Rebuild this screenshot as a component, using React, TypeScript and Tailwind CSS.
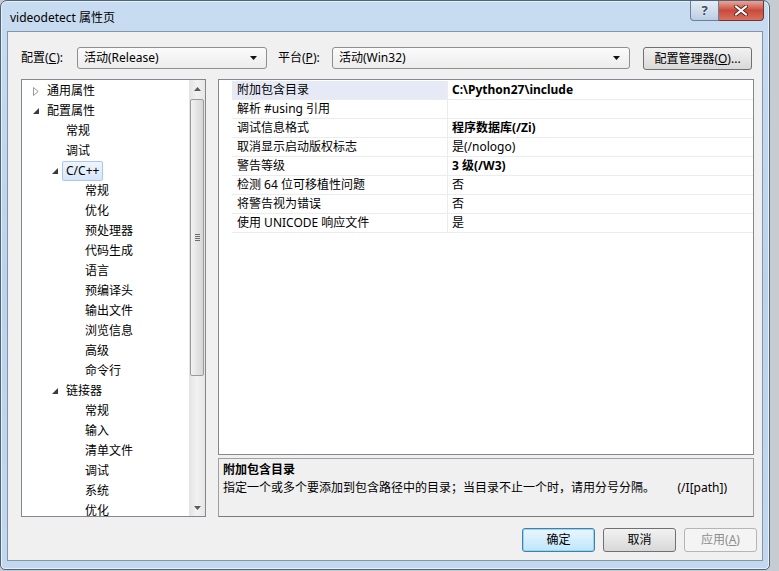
import React from 'react';

type TreeItem = {
  label: string;
  level: 0 | 1 | 2;
  arrow?: 'open' | 'closed';
  selected?: boolean;
};

const treeItems: TreeItem[] = [
  { label: '通用属性', level: 0, arrow: 'closed' },
  { label: '配置属性', level: 0, arrow: 'open' },
  { label: '常规', level: 1 },
  { label: '调试', level: 1 },
  { label: 'C/C++', level: 1, arrow: 'open', selected: true },
  { label: '常规', level: 2 },
  { label: '优化', level: 2 },
  { label: '预处理器', level: 2 },
  { label: '代码生成', level: 2 },
  { label: '语言', level: 2 },
  { label: '预编译头', level: 2 },
  { label: '输出文件', level: 2 },
  { label: '浏览信息', level: 2 },
  { label: '高级', level: 2 },
  { label: '命令行', level: 2 },
  { label: '链接器', level: 1, arrow: 'open' },
  { label: '常规', level: 2 },
  { label: '输入', level: 2 },
  { label: '清单文件', level: 2 },
  { label: '调试', level: 2 },
  { label: '系统', level: 2 },
  { label: '优化', level: 2 },
];

const props: { name: string; value: string; bold?: boolean; focused?: boolean }[] = [
  { name: '附加包含目录', value: 'C:\\Python27\\include', bold: true, focused: true },
  { name: '解析 #using 引用', value: '' },
  { name: '调试信息格式', value: '程序数据库(/Zi)', bold: true },
  { name: '取消显示启动版权标志', value: '是(/nologo)' },
  { name: '警告等级', value: '3 级(/W3)', bold: true },
  { name: '检测 64 位可移植性问题', value: '否' },
  { name: '将警告视为错误', value: '否' },
  { name: '使用 UNICODE 响应文件', value: '是' },
];

const indent = ['pl-[8px]', 'pl-[27px]', 'pl-[46px]'];

const DropArrow = () => (
  <svg width="7" height="4" viewBox="0 0 7 4">
    <path d="M0 0H7L3.5 4Z" fill="#111" />
  </svg>
);

const Combo = ({ text, width }: { text: string; width: string }) => (
  <div
    className={`${width} h-[22px] flex items-center justify-between pl-[6px] pr-[9px] border border-[#8e8f8f] rounded-[3px] bg-linear-to-b from-[#fbfbfb] to-[#ececec]`}
  >
    <span className="text-[12px] leading-none">{text}</span>
    <DropArrow />
  </div>
);

const WinButton = ({
  children,
  variant = 'normal',
}: {
  children: React.ReactNode;
  variant?: 'normal' | 'default' | 'disabled';
}) => {
  let cls = 'w-[73px] h-[24px] flex items-center justify-center rounded-[3px] border text-[12px] ';
  if (variant === 'default') {
    cls += 'border-[#3c7fb1] bg-linear-to-b from-[#eaf6fd] to-[#bee6fd] shadow-[inset_0_0_0_1px_#98d5f5] text-black';
  } else if (variant === 'disabled') {
    cls += 'border-[#b5b5b5] bg-[#f4f4f4] text-[#8d8d8d]';
  } else {
    cls += 'border-[#707070] bg-linear-to-b from-[#f2f2f2] to-[#d8d8d8] text-black';
  }
  return <div className={cls}>{children}</div>;
};

const TreeArrow = ({ kind }: { kind?: 'open' | 'closed' }) => {
  if (kind === 'closed')
    return (
      <svg width="6" height="9" viewBox="0 0 6 9">
        <path d="M0.5 0.5L5.2 4.5L0.5 8.5Z" fill="#fff" stroke="#9a9a9a" />
      </svg>
    );
  if (kind === 'open')
    return (
      <svg width="6" height="6" viewBox="0 0 6 6">
        <path d="M6 0V6H0Z" fill="#3a3a3a" />
      </svg>
    );
  return null;
};

const ScrollArrow = ({ up }: { up?: boolean }) => (
  <div className="h-[17px] flex items-center justify-center">
    <svg width="7" height="4" viewBox="0 0 7 4">
      <path d={up ? 'M0 4H7L3.5 0Z' : 'M0 0H7L3.5 4Z'} fill="#5a5a5a" />
    </svg>
  </div>
);

export default function App() {
  return (
    <div className="w-[779px] h-[571px] overflow-hidden bg-[#c7ccd2] font-['Noto_Sans','Noto_Sans_CJK_SC',sans-serif] text-black">
      <div className="w-[770px] h-[570px] flex flex-col rounded-t-[7px] rounded-b-[5px] border border-[#4f6479] bg-linear-to-b from-[#c8dcf1] via-[#bcd3eb] to-[#c3d8ee] shadow-[inset_0_0_0_1px_#e6f0fa]">
        {/* title bar */}
        <div className="h-[30px] flex items-start">
          <div className="pl-[9px] pt-[8px] text-[12px] leading-[18px]">videodetect 属性页</div>
          <div className="ml-auto mr-[5px] flex">
            <div className="w-[29px] h-[20px] flex items-center justify-center border border-[#6b7f99] border-t-0 rounded-bl-[4px] bg-linear-to-b from-[#e4edf7] to-[#bccde2] text-[13px] font-bold text-[#3d4a5c] leading-none [text-shadow:0_0_2px_#fff]">
              ?
            </div>
            <div className="w-[45px] h-[20px] flex items-center justify-center border border-[#6e3631] border-t-0 border-l-0 rounded-br-[4px] bg-linear-to-b from-[#e7a69a] via-[#c94a3c] to-[#d9705f]">
              <svg width="14" height="11" viewBox="0 0 14 11">
                <path d="M2 1.5L12 9.5M12 1.5L2 9.5" stroke="#5a2a26" strokeWidth="4" strokeLinecap="round" />
                <path d="M2 1.5L12 9.5M12 1.5L2 9.5" stroke="#fff" strokeWidth="2.2" strokeLinecap="round" />
              </svg>
            </div>
          </div>
        </div>

        {/* client area */}
        <div className="flex-1 mx-[6px] mb-[8px] border border-[#8196ad] bg-[#f0f0f0] flex flex-col text-[12px]">
          {/* config row */}
          <div className="pt-[15px] pl-[13px] h-[38px] flex items-start">
            <div className="w-[56px] h-[22px] flex items-center">
              配置(<span className="underline">C</span>):
            </div>
            <Combo text="活动(Release)" width="w-[190px]" />
            <div className="ml-[11px] w-[54px] h-[22px] flex items-center">
              平台(<span className="underline">P</span>):
            </div>
            <Combo text="活动(Win32)" width="w-[298px]" />
            <div className="ml-[13px] w-[109px] h-[23px] flex items-center justify-center rounded-[3px] border border-[#707070] bg-linear-to-b from-[#f2f2f2] to-[#d9d9d9]">
              配置管理器(<span className="underline">O</span>)...
            </div>
          </div>

          {/* main area */}
          <div className="mt-[9px] pl-[13px] flex h-[438px]">
            {/* tree */}
            <div className="w-[185px] border border-[#828790] bg-white flex">
              <div className="flex-1 overflow-hidden pt-[1px]">
                {treeItems.map((it, i) => (
                  <div key={i} className={`h-[20px] flex items-center ${indent[it.level]}`}>
                    <div className="w-[12px] flex items-center justify-center">
                      <TreeArrow kind={it.arrow} />
                    </div>
                    <div
                      className={
                        it.selected
                          ? 'ml-[1px] h-[20px] px-[3px] flex items-center rounded-[2px] border border-[#a9c7ec] bg-linear-to-b from-[#eef5fd] to-[#d6e7fb]'
                          : 'ml-[5px]'
                      }
                    >
                      {it.label}
                    </div>
                  </div>
                ))}
              </div>
              {/* scrollbar */}
              <div className="w-[16px] flex flex-col bg-linear-to-r from-[#e3e3e3] via-[#f2f2f2] to-[#e6e6e6]">
                <ScrollArrow up />
                <div className="flex-1 px-[1px] pt-[2px] pb-[123px]">
                  <div className="h-full rounded-[2px] border border-[#9a9a9a] bg-linear-to-r from-[#f3f3f3] to-[#d6d6d6] flex items-center justify-center">
                    <div className="flex flex-col gap-[1px]">
                      <div className="w-[5px] h-[1px] bg-[#6d6d6d]" />
                      <div className="w-[5px] h-[1px] bg-[#6d6d6d]" />
                      <div className="w-[5px] h-[1px] bg-[#6d6d6d]" />
                      <div className="w-[5px] h-[1px] bg-[#6d6d6d]" />
                    </div>
                  </div>
                </div>
                <ScrollArrow />
              </div>
            </div>

            {/* property grid + description */}
            <div className="ml-[12px] w-[536px] flex flex-col">
              <div className="h-[376px] border border-[#828790] bg-white pt-[1px]">
                {props.map((p, i) => (
                  <div key={i} className="h-[19px] flex">
                    <div className="w-[13px]" />
                    <div
                      className={`w-[216px] pl-[5px] flex items-center border-b border-r border-[#ececec] ${
                        p.focused ? 'bg-[#e6eaf6]' : ''
                      }`}
                    >
                      {p.name}
                    </div>
                    <div className={`flex-1 pl-[4px] flex items-center border-b border-[#ececec] ${p.bold ? 'font-bold' : ''}`}>
                      {p.value}
                    </div>
                  </div>
                ))}
              </div>
              <div className="mt-[3px] flex-1 border border-[#a0a0a0] border-b-[#7a7a7a] pl-[4px] pt-[2px]">
                <div className="font-bold leading-[18px]">附加包含目录</div>
                <div className="flex leading-[18px]">
                  <span>指定一个或多个要添加到包含路径中的目录；当目录不止一个时，请用分号分隔。</span>
                  <span className="ml-auto mr-[26px]">(/I[path])</span>
                </div>
              </div>
            </div>
          </div>

          {/* buttons */}
          <div className="mt-[11px] pr-[5px] flex justify-end gap-[8px]">
            <WinButton variant="default">确定</WinButton>
            <WinButton>取消</WinButton>
            <WinButton variant="disabled">
              应用(<span className="underline">A</span>)
            </WinButton>
          </div>
        </div>
      </div>
    </div>
  );
}
